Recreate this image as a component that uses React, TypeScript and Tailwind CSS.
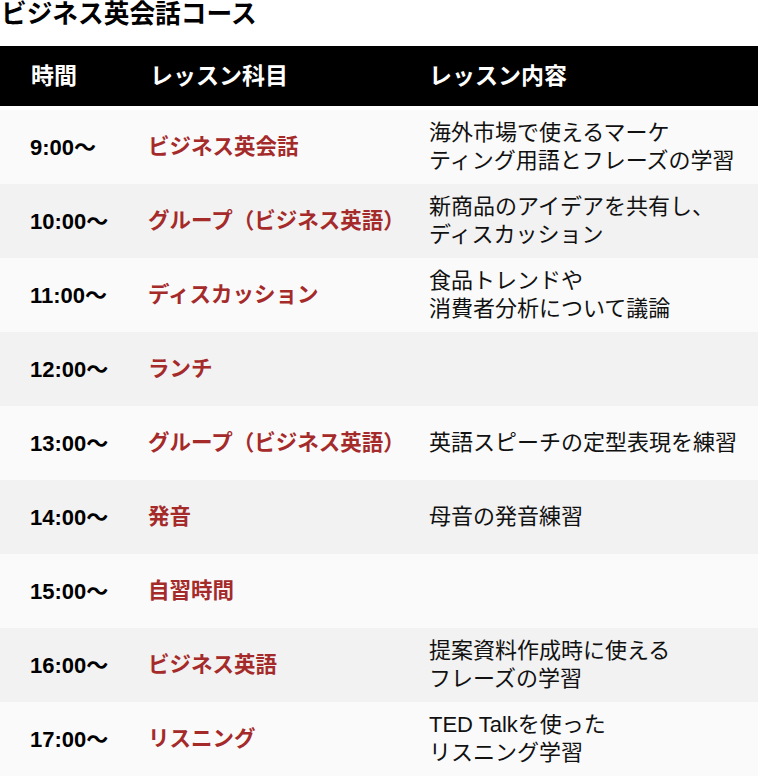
import React from "react";

const rows = [
  { time: "9:00〜", subject: "ビジネス英会話", content: ["海外市場で使えるマーケ", "ティング用語とフレーズの学習"] },
  { time: "10:00〜", subject: "グループ（ビジネス英語）", content: ["新商品のアイデアを共有し、", "ディスカッション"] },
  { time: "11:00〜", subject: "ディスカッション", content: ["食品トレンドや", "消費者分析について議論"] },
  { time: "12:00〜", subject: "ランチ", content: [] },
  { time: "13:00〜", subject: "グループ（ビジネス英語）", content: ["英語スピーチの定型表現を練習"] },
  { time: "14:00〜", subject: "発音", content: ["母音の発音練習"] },
  { time: "15:00〜", subject: "自習時間", content: [] },
  { time: "16:00〜", subject: "ビジネス英語", content: ["提案資料作成時に使える", "フレーズの学習"] },
  { time: "17:00〜", subject: "リスニング", content: ["TED Talkを使った", "リスニング学習"] },
];

export default function App() {
  return (
    <div
      className="w-[758px] bg-white text-black"
      style={{ fontFamily: '"Liberation Sans", "Noto Sans CJK JP", sans-serif' }}
    >
      <h2 className="h-[46px] pl-[1px] text-[25.7px] font-bold leading-[29px]">ビジネス英会話コース</h2>
      <div className="grid h-[60px] grid-cols-[150px_279px_1fr] items-center bg-black text-[23px] font-bold text-white">
        <div className="pl-[31px]">時間</div>
        <div>レッスン科目</div>
        <div>レッスン内容</div>
      </div>
      <div className="h-[4px] bg-white" />
      {rows.map((r, i) => (
        <div
          key={r.time}
          className={`grid h-[74px] grid-cols-[148px_281px_1fr] items-center ${i % 2 === 0 ? "bg-[#fafafa]" : "bg-[#f2f2f2]"}`}
        >
          <div className="pl-[30px] text-[22px] font-bold">{r.time}</div>
          <div className="text-[21.5px] font-bold text-[#a52a2a]">{r.subject}</div>
          <div className="text-[22px] leading-[28px] text-[#111]">
            {r.content.map((c) => (
              <div key={c}>{c}</div>
            ))}
          </div>
        </div>
      ))}
    </div>
  );
}
